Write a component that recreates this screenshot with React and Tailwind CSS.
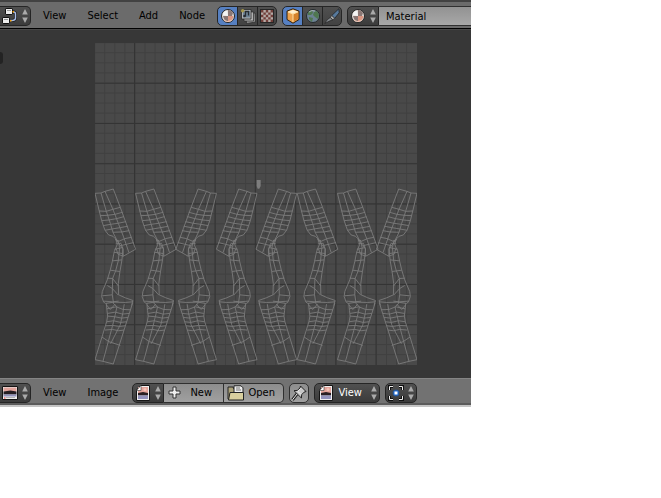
import React from "react";

const Svg = ({ children, className = "" }) => (
  <svg viewBox="0 0 16 16" className={"h-4 w-4 shrink-0 " + className} aria-hidden="true">
    {children}
  </svg>
);

const Arrows = ({ className = "" }) => (
  <svg viewBox="0 0 6 14" className={"h-3.5 w-1.5 shrink-0 " + className} aria-hidden="true">
    <path d="M3 0L5.8 5.5H.2zM3 14L.2 8.5h5.6z" fill="#aaa" />
  </svg>
);

const NodeIcon = () => (
  <Svg>
    <path d="M9 4h2.500q2 0 2 2v4q0 2.500-4 2.500H6.500" fill="none" stroke="#222" strokeWidth="3" />
    <path d="M9 4h2.500q2 0 2 2v4q0 2.500-4 2.500H6.500" fill="none" stroke="#a9bde8" strokeWidth="1.400" />
    <rect x="3.500" y=".5" width="7" height="6" rx=".6" fill="#eee" stroke="#111" />
    <rect x=".5" y="9.500" width="7" height="6" rx=".6" fill="#eee" stroke="#111" />
    <path d="M5 2.500h4M2 11.500h4" stroke="#999" />
    <path d="M10.500 3H12v1.500h-1.500zM8 12h1.500v1.500H8z" fill="#f5a000" />
  </Svg>
);

const MaterialIcon = () => (
  <Svg>
    <circle cx="8" cy="8" r="6.500" fill="#e8e1dd" stroke="#242424" />
    <path d="M8 2Q11.500 2 13 5L12 8H8zM3 8h5v6Q4 13 3 8z" fill="#8a7774" />
    <path d="M8 8h5.500Q13 13 8 13.800z" fill="#d99581" />
    <path d="M3 7Q3 3 7 2.500L8 8z" fill="#f4f4f4" />
    <path d="M4 12.500Q8 15 12 12" stroke="#edc3b1" fill="none" />
  </Svg>
);

const TextureStackIcon = () => (
  <Svg className="opacity-80">
    <path d="M6 6l9-1 .5 9-9 1.500z" fill="#aaa" stroke="#222" strokeWidth=".7" />
    <path d="M4 4h9.500v9H4z" fill="#ccc" stroke="#222" strokeWidth=".7" />
    <path d="M1.500 1.500h9.500v9.500H1.500z" fill="#c8ccd0" stroke="#222" strokeWidth=".8" />
    <path d="M3 3h7v6.500H3z" fill="#7892a9" />
    <path d="M5.500 8.500V3.500h3v4" fill="none" stroke="#20262c" strokeWidth="1.300" />
    <circle cx="4.500" cy="8" r="1.300" fill="#20262c" />
    <circle cx="2.700" cy="2.700" r="1.800" fill="#baa94c" />
  </Svg>
);

const CheckerIcon = () => (
  <Svg>
    <rect x="1.500" y="1.500" width="13" height="13" fill="#b5aaa6" stroke="#272727" />
    <path d="M2 2h2.400v2.400H2zM6.800 2h2.400v2.400H6.800zM11.600 2H14v2.400h-2.400zM4.400 4.400h2.400v2.400H4.400zM9.200 4.400h2.400v2.400H9.200zM2 6.800h2.400v2.400H2zM6.800 6.800h2.400v2.400H6.800zM11.600 6.800H14v2.400h-2.400zM4.400 9.200h2.400v2.400H4.400zM9.200 9.200h2.400v2.400H9.200zM2 11.600h2.400V14H2zM6.800 11.600h2.400V14H6.800zM11.600 11.600H14V14h-2.400z" fill="#713e39" />
  </Svg>
);

const CubeIcon = () => (
  <Svg>
    <path d="M8 .8l6 2.300v8.400L8 15.200l-6-3.700V3.100z" fill="#eda24c" stroke="#30200d" />
    <path d="M2.800 3.700L8 1.700l5.200 2L8 6z" fill="#fff0cf" />
    <path d="M8 6l5.200-2v7L8 14z" fill="#d5822b" />
    <path d="M8 6v8M3 4l5 2 5-2" fill="none" stroke="#ffe0a4" />
  </Svg>
);

const WorldIcon = () => (
  <Svg>
    <circle cx="8" cy="8" r="6.500" fill="#6c8294" stroke="#252a2c" />
    <path d="M3 4l4-2 1 3-2 2H3zM9 4l3-1 2 4-1 4-3-2-2-2zM4 9l4 1-1 4-3-3z" fill="#4f7750" />
    <path d="M4 4q3-2.500 6-1" stroke="#a5b0b4" fill="none" />
  </Svg>
);

const BrushIcon = () => (
  <Svg>
    <path d="M14.800.8l.4 4-4.500 5.500-3-2.700z" fill="#57799c" stroke="#202225" strokeWidth=".8" />
    <path d="M7.700 7.600l3 2.700-2 1.500-2.500-2.300z" fill="#aaa" stroke="#292929" strokeWidth=".6" />
    <path d="M6.200 9.500l2.500 2.300Q5 13 .8 15.500 3 11 6.200 9.500z" fill="#868b90" stroke="#222" strokeWidth=".7" />
  </Svg>
);

const ImageEditorIcon = () => (
  <Svg>
    <path d="M.5 1.500h15v13H.5z" fill="#eee" stroke="#151515" />
    <path d="M1.500 2.500h13v4h-13z" fill="#e1a39b" />
    <path d="M1.500 6.500l7-1 6 1v3h-13z" fill="#251d22" />
    <path d="M1.500 9.500h13v2h-13z" fill="#9292bc" />
    <path d="M2 13h1.500" stroke="#e22" />
    <path d="M4 12.500h9" stroke="#777" strokeWidth=".5" />
  </Svg>
);

const ImageIcon = () => (
  <Svg>
    <path d="M5.500.5h9v15h-13V5z" fill="#f0f0f0" stroke="#151515" />
    <path d="M3 2h10v6H3z" fill="#e3a49b" />
    <path d="M3 8l5-1 5 1v2.500H3z" fill="#291e22" />
    <path d="M3 10.500h10V14H3z" fill="#9292bc" />
    <circle cx="10" cy="4.500" r="1.500" fill="#f4c4b8" />
    <path d="M1.500 5.500h4.500V.5z" fill="#fff" stroke="#333" strokeWidth=".6" />
  </Svg>
);

const FolderIcon = () => (
  <svg viewBox="0 0 18 16" className="h-4 w-[18px] shrink-0" aria-hidden="true">
    <path d="M1 14V2h5l1 2h7v10z" fill="#aaa178" stroke="#222" />
    <path d="M7 .8h7l2 2V11H7z" fill="#eee" stroke="#222" />
    <path d="M9 3h4M9 5h5" stroke="#777" />
    <path d="M3 7.500h13.500V15H1.500z" fill="#d9cf9e" stroke="#222" />
  </svg>
);

const PinIcon = () => (
  <Svg>
    <path d="M1.500 14.800L6 9" stroke="#222" strokeWidth="3" />
    <path d="M9.500 1l5.500 5.500-2 .7-2.300 2.500-.3 3.300L3 5.700l3.300-.3L9 3z" fill="#c7c7c7" stroke="#222" />
    <path d="M1.500 14.800L6 9M9.500 3.500L6.800 6.500l3 2.500" fill="none" stroke="#eee" />
  </Svg>
);

const PivotIcon = () => (
  <Svg>
    <path d="M1.500 5V1.500H5M11 1.500h3.500V5M14.500 11v3.500H11M5 14.500H1.500V11" fill="none" stroke="#111" strokeWidth="3" />
    <path d="M1.500 5V1.500H5M11 1.500h3.500V5M14.500 11v3.500H11M5 14.500H1.500V11" fill="none" stroke="#eee" />
    <circle cx="8" cy="8" r="3.500" fill="#1d5fae" opacity=".5" />
    <path d="M6 6h4v4H6z" fill="#fff" stroke="#1764d1" />
  </Svg>
);

const dark =
  "flex h-5 items-center justify-center border border-[#252525] bg-linear-to-b from-[#505050] to-[#3b3b3b]";
const light =
  "flex h-5 items-center border border-[#303030] bg-linear-to-b from-[#8d8d8d] to-[#a0a0a0]";

const Menu = ({ items }) => (
  <nav className="ml-3 flex shrink-0 gap-[21px] pt-px">
    {items.map((item) => (
      <button key={item} type="button">{item}</button>
    ))}
  </nav>
);

const Toggles = ({ items }) => (
  <div className="flex shrink-0">
    {items.map(([name, Icon], i) => (
      <button
        key={name}
        type="button"
        aria-label={name}
        aria-pressed={i === 0}
        className={
          "-mr-px flex h-5 w-[21px] items-center justify-center border border-[#252525] first:rounded-l-[5px] last:mr-0 last:w-5 last:rounded-r-[5px] " +
          (i === 0 ? "bg-[#5680c2]" : "bg-linear-to-b from-[#505050] to-[#424242]")
        }
      >
        <Icon />
      </button>
    ))}
  </div>
);

const limb = [
  // Thigh
  "M14 40L32 39L44 34L69 27L90 82L113 145L136 208L99 229L83 223L78 207",
  "M14 40L26 90L34 122L44 151L55 165L68 169L76 177L80 185",
  "M32 39L48 94L60 130L68 157L83 187L98 207L99 229",
  "M44 34L68 88L84 130L100 171L116 218",
  "M26 93L48 94L68 88L90 82M30 107L52 106L74 103L97 97M34 122L56 120L79 116L101 110",
  "M39 137L61 133L84 130L107 125M44 151L66 147L90 143L112 139M68 157L95 156L117 152",
  "M76 179L86 184L104 176L124 172M91 197L109 193L130 188",
  // Knee and shin
  "M76 177L81 193L72 215L66 245L60 270L51 300L36 335L34 350L40 367L46 371",
  "M83 180L88 203L84 243L76 273L67 296L66 345L70 372",
  "M92 190L98 207L95 240L89 275L84 311L85 345L105 354L128 362L124 377",
  "M71 217L97 221M66 243L95 240M60 271L89 275M51 295L67 296L84 318",
  "M36 348L66 345M51 317L66 326L84 346M40 364L67 366L85 364",
  "M46 371L70 367L105 368L128 366M76 192L92 190M72 208L97 203",
  // Calf and foot
  "M48 371L50 392L52 409L49 426L14 540L38 545L69 553L127 370",
  "M48 375L60 389L75 373M70 372L80 381L75 404L67 437L38 545",
  "M102 373L98 398L90 435L61 492",
  "M50 387L78 381L98 389L121 390M52 401L75 397L96 403L117 401M52 409L74 411L94 415L113 413",
  "M49 426L70 423L91 428L109 426M47 438L67 437L88 440L105 438M44 451L66 449L85 453L101 451",
  "M35 472L56 486L90 497",
].join(" ");

const step = 121;
const limbs = [
  [0, 1],
  [122, 1],
  [365, -1],
  [487, -1],
  [606, -1],
  [608, 1],
  [729, 1],
  [968, -1],
];

const UvCanvas = () => (
  <svg viewBox="0 0 968 968" className="block w-full" role="img" aria-label="UV layout">
    <path d="M0 0h968v968H0z" fill="#494949" />
    {Array.from({ length: 32 }, (_, i) => (
      <path
        key={i}
        d={`M${i * 30.25 - 1} 0v968M0 ${i * 30.25 - 1}h968`}
        stroke="#404040"
        strokeWidth="3"
      />
    ))}
    {Array.from({ length: 7 }, (_, i) => (
      <path
        key={i}
        d={`M${(i + 1) * step - 2} 0v968M0 ${(i + 1) * step}h968`}
        stroke="#343434"
        strokeWidth="3"
      />
    ))}
    <path d="M486 412h12v18l-4 8h-5l-3-8z" fill="#7d7d7d" />
    <g fill="none" stroke="#7d7d7d" strokeWidth="2.600">
      {limbs.map(([x, side], i) => (
        <path
          key={i}
          d={limb}
          transform={`translate(${x - side * 14} 412) scale(${side} 1)`}
        />
      ))}
    </g>
  </svg>
);

export default function App() {
  return (
    <main className="w-full max-w-[471px] overflow-hidden bg-[#373737] font-['DejaVu_Sans_Condensed','DejaVu_Sans',sans-serif] text-[11px] leading-4 text-black">
      <header className="flex h-[29px] items-center border-t-2 border-b border-t-[#424242] border-b-black bg-[#6b6b6b] pt-px">
        <button type="button" aria-label="Node editor" className={dark + " w-[31px] shrink-0 gap-1 rounded-r-[5px] border-l-0"}>
          <NodeIcon />
          <Arrows />
        </button>
        <Menu items={["View", "Select", "Add", "Node"]} />
        <div className="ml-3 flex min-w-0 flex-1 gap-[5px]">
          <Toggles items={[["Shader nodes", MaterialIcon], ["Compositing nodes", TextureStackIcon], ["Texture nodes", CheckerIcon]]} />
          <Toggles items={[["Object", CubeIcon], ["World", WorldIcon], ["Line style", BrushIcon]]} />
          <div className="flex min-w-0 flex-1">
            <button type="button" aria-label="Browse material" className={dark + " w-8 shrink-0 gap-1 rounded-l-[5px]"}>
              <MaterialIcon />
              <Arrows />
            </button>
            <input
              aria-label="Material name"
              defaultValue="Material"
              className="h-5 min-w-0 flex-1 border-y border-[#303030] bg-linear-to-b from-[#929292] to-[#a8a8a8] px-[7px] pt-px outline-none"
            />
          </div>
        </div>
      </header>

      <section className="relative border-t border-[#484848] pt-[13px] pr-[54px] pb-[13px] pl-[95px]">
        <span className="absolute top-[22px] left-0 h-3 w-[3px] rounded-r bg-[#232323]" />
        <UvCanvas />
      </section>

      <footer className="flex h-[29px] items-center border-t border-b-2 border-t-[#858585] border-b-[#c4c4c4] bg-[#727272] pt-px shadow-[inset_0_-2px_0_#5b5b5b]">
        <button type="button" aria-label="Image editor" className={dark + " w-[31px] shrink-0 gap-1 rounded-r-[5px] border-l-0"}>
          <ImageEditorIcon />
          <Arrows />
        </button>
        <Menu items={["View", "Image"]} />
        <div className="ml-3.5 flex shrink-0 gap-[5px]">
          <div className="flex">
            <button type="button" aria-label="Browse image" className={dark + " w-8 gap-1 rounded-l-[5px]"}>
              <ImageIcon />
              <Arrows />
            </button>
            <button type="button" className={light + " w-[60px] gap-[7px] border-l-0 pt-px pl-[3px]"}>
              <Svg>
                <path d="M6 2h3v4h4v3H9v4H6V9H2V6h4z" fill="#eee" stroke="#333" />
              </Svg>
              New
            </button>
            <button type="button" className={light + " w-[60px] gap-[3px] rounded-r-[5px] border-l-0 pt-px pl-[3px]"}>
              <FolderIcon />
              Open
            </button>
          </div>
          <button type="button" aria-label="Pin" className={light + " w-5 justify-center rounded-[5px]"}>
            <PinIcon />
          </button>
          <div className="relative flex">
            <select aria-label="Image mode" className="h-5 w-[66px] appearance-none rounded-[5px] border border-[#252525] bg-linear-to-b from-[#505050] to-[#3b3b3b] pt-px pl-[23px] text-white">
              <option>View</option>
            </select>
            <span className="pointer-events-none absolute inset-0 flex items-center justify-between pr-[3px] pl-1">
              <ImageIcon />
              <Arrows />
            </span>
          </div>
          <button type="button" aria-label="Pivot" className={dark + " w-8 gap-1 rounded-[5px]"}>
            <PivotIcon />
            <Arrows />
          </button>
        </div>
      </footer>
    </main>
  );
}
